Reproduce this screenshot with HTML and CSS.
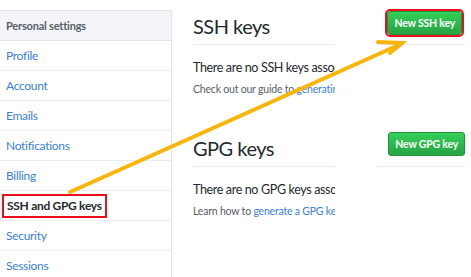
FILE: index.html
```html
<!DOCTYPE html>
<html lang="en">
<head>
    <meta charset="UTF-8">
    <title>SSH and GPG keys</title>
    <link rel="stylesheet" href="styles.css">
</head>
<body>
    <div class="page">
        <nav class="menu">
            <div class="menu-heading">Personal settings</div>
            <a class="menu-item" href="#">Profile</a>
            <a class="menu-item" href="#">Account</a>
            <a class="menu-item" href="#">Emails</a>
            <a class="menu-item" href="#">Notifications</a>
            <a class="menu-item" href="#">Billing</a>
            <a class="menu-item selected" href="#"><span class="mark">SSH and GPG keys</span></a>
            <a class="menu-item" href="#">Security</a>
            <a class="menu-item" href="#">Sessions</a>
        </nav>
        <div class="content">
            <div class="section">
                <div class="section-main">
                    <h2 class="subhead">SSH keys</h2>
                    <p class="blank">There are no SSH keys associ</p>
                    <p class="note">Check out our guide to <a href="#">generatin</a></p>
                </div>
                <div class="section-action">
                    <button class="btn marked">New SSH key</button>
                </div>
            </div>
            <div class="section">
                <div class="section-main">
                    <h2 class="subhead">GPG keys</h2>
                    <p class="blank">There are no GPG keys assoc</p>
                    <p class="note">Learn how to <a href="#">generate a GPG key</a></p>
                </div>
                <div class="section-action">
                    <button class="btn">New GPG key</button>
                </div>
            </div>
        </div>
        <svg class="arrow" width="471" height="277" viewBox="0 0 471 277">
            <g stroke="#fbb40a" stroke-width="4" stroke-linecap="round" fill="none">
                <line x1="70" y1="192" x2="401" y2="44"/>
                <polyline points="378,42 402,43 390,53"/>
            </g>
        </svg>
    </div>
</body>
</html>
```
FILE: styles.css
```css
body {
    margin: 0;
    font-family: Lato, 'Noto Sans', sans-serif;
    color: #24292e;
    background-color: #fff;
}
.page {
    position: relative;
    display: flex;
    width: 471px;
    height: 277px;
    overflow: hidden;
}
.menu {
    flex: none;
    width: 172px;
    margin-top: 10px;
    border-top: 1px solid #e1e4e8;
    border-right: 1px solid #e1e4e8;
    box-sizing: border-box;
}
.menu-heading {
    height: 29px;
    line-height: 29px;
    padding-left: 6px;
    background-color: #f3f5f8;
    border-bottom: 1px solid #e1e4e8;
    color: #586069;
    font-size: 11px;
    font-weight: 700;
    letter-spacing: -0.2px;
}
.menu-item {
    display: flex;
    align-items: center;
    height: 29px;
    padding-left: 6px;
    border-bottom: 1px solid #eaecef;
    color: #3b7fd9;
    font-size: 12px;
    letter-spacing: -0.3px;
    text-decoration: none;
}
.menu-item.selected {
    padding-left: 2px;
    color: #24292e;
}
.menu-item .mark {
    padding: 2px 3px 3px 3px;
    border: 2px solid #e8111c;
    font-weight: 700;
}
.content {
    flex: 1;
    padding: 10px 6px 0 21px;
}
.section {
    display: flex;
    gap: 42px;
    margin-bottom: 37px;
}
.section-main {
    width: 142px;
    flex: none;
    overflow: hidden;
    white-space: nowrap;
}
.subhead {
    margin: 0;
    height: 34px;
    line-height: 32px;
    border-bottom: 1px solid #eaecef;
    font-size: 20px;
    font-weight: 400;
    letter-spacing: -0.5px;
}
.blank {
    margin: 15px 0 0 0;
    font-size: 12.5px;
    letter-spacing: -0.35px;
}
.note {
    margin: 8px 0 0 0;
    color: #586069;
    font-size: 10.5px;
    letter-spacing: -0.2px;
}
.note a {
    color: #3b7fd9;
    text-decoration: none;
}
.section-action {
    flex: 1;
    height: 34px;
    border-bottom: 1px solid #eaecef;
    display: flex;
    justify-content: flex-end;
    align-items: flex-start;
}
.btn {
    height: 24px;
    padding: 0 6px;
    border: 1px solid #23913d;
    border-radius: 3px;
    background-image: linear-gradient(#34d058, #28a745 90%);
    color: #fff;
    font-family: Lato, 'Noto Sans', sans-serif;
    font-size: 10.5px;
    font-weight: 700;
    letter-spacing: -0.2px;
    white-space: nowrap;
}
.btn.marked {
    margin-top: 1px;
    margin-right: 3px;
    outline: 2px solid #e8111c;
    outline-offset: 0;
}
.arrow {
    position: absolute;
    left: 0;
    top: 0;
    pointer-events: none;
}
```
